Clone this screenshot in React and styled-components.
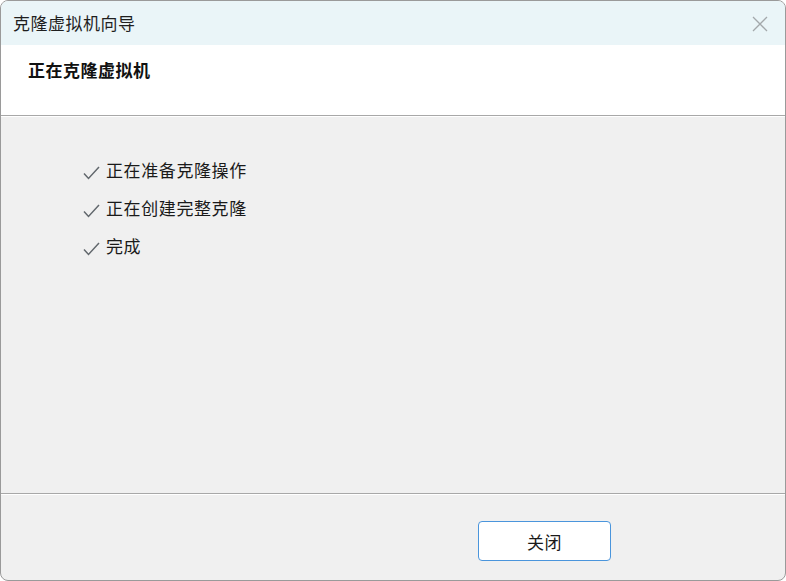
import React from 'react';
import styled, { createGlobalStyle } from 'styled-components';

const GlobalStyle = createGlobalStyle`
  html, body {
    margin: 0;
    padding: 0;
    background: #ffffff;
  }
  body {
    font-family: "Noto Sans CJK SC", "Noto Sans", sans-serif;
  }
`;

const StyledWindow = styled.div`
  width: 786px;
  height: 581px;
  box-sizing: border-box;
  border: 1px solid #9a9a9a;
  border-radius: 8px;
  overflow: hidden;
  display: flex;
  flex-direction: column;
  background: #f0f0f0;
`;

const StyledTitleBar = styled.div`
  height: 44px;
  flex-shrink: 0;
  background: #eaf5f8;
  display: flex;
  align-items: center;
  justify-content: space-between;
  padding: 0 17px 0 12px;
`;

const StyledTitle = styled.div`
  font-size: 17px;
  color: #1f1f1f;
  letter-spacing: 0.5px;
  margin-top: -2px;
`;

const StyledClose = styled.svg`
  width: 16px;
  height: 16px;
  margin-top: 1px;
`;

const StyledHeader = styled.div`
  height: 71px;
  flex-shrink: 0;
  background: #ffffff;
  padding: 12px 27px 0;
  box-sizing: border-box;
  border-bottom: 1px solid #a8a8a8;
`;

const StyledHeading = styled.div`
  font-size: 17px;
  font-weight: 700;
  color: #111111;
  letter-spacing: 0.5px;
`;

const StyledDivider = styled.div`
  height: 1px;
  flex-shrink: 0;
  background: #ffffff;
`;

const StyledBody = styled.div`
  flex: 1;
  padding: 40px 0 0 82px;
  display: flex;
  flex-direction: column;
  gap: 13px;
  border-bottom: 1px solid #a8a8a8;
`;

const StyledStep = styled.div`
  display: flex;
  align-items: center;
  gap: 6px;
  height: 25px;
  font-size: 17px;
  color: #1a1a1a;
  letter-spacing: 0.6px;
`;

const StyledCheck = styled.svg`
  width: 17px;
  height: 14px;
  margin-top: 6px;
  flex-shrink: 0;
`;

const StyledFooter = styled.div`
  height: 85px;
  flex-shrink: 0;
  display: flex;
  justify-content: flex-end;
  padding: 26px 174px 0 0;
  box-sizing: border-box;
`;

const StyledButton = styled.button`
  width: 133px;
  height: 40px;
  background: #ffffff;
  border: 1px solid #4a95dc;
  border-radius: 4px;
  font-family: inherit;
  font-size: 17px;
  color: #1a1a1a;
  letter-spacing: 0.5px;
  padding: 0;
`;

const steps = ['正在准备克隆操作', '正在创建完整克隆', '完成'];

const Check = () => (
  <StyledCheck viewBox="0 0 17 14">
    <path d="M1 7.5 L5.5 12.5 L16 1" fill="none" stroke="#62686d" strokeWidth="1.5" />
  </StyledCheck>
);

const App = () => (
  <>
    <GlobalStyle />
    <StyledWindow>
      <StyledTitleBar>
        <StyledTitle>克隆虚拟机向导</StyledTitle>
        <StyledClose viewBox="0 0 16 16">
          <path d="M1 1 L15 15 M15 1 L1 15" stroke="#a3a8ab" strokeWidth="1.3" />
        </StyledClose>
      </StyledTitleBar>
      <StyledHeader>
        <StyledHeading>正在克隆虚拟机</StyledHeading>
      </StyledHeader>
      <StyledDivider />
      <StyledBody>
        {steps.map(step => (
          <StyledStep key={step}>
            <Check />
            {step}
          </StyledStep>
        ))}
      </StyledBody>
      <StyledDivider />
      <StyledFooter>
        <StyledButton>关闭</StyledButton>
      </StyledFooter>
    </StyledWindow>
  </>
);

export default App;
